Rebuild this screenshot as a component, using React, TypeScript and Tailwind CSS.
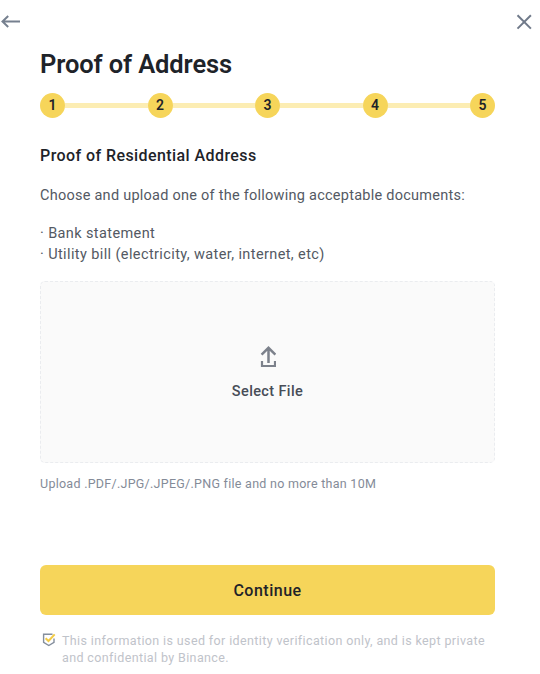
import { Fragment } from 'react';

const steps = [1, 2, 3, 4, 5];

const documents = ['Bank statement', 'Utility bill (electricity, water, internet, etc)'];

function BackIcon() {
    return (
        <svg width="20" height="14" viewBox="0 0 20 14" fill="none" stroke="#76808f" strokeWidth="2">
            <path d="M19 6.5H2.2M7.2 1L1.5 6.5l5.7 5.5" />
        </svg>
    );
}

function CloseIcon() {
    return (
        <svg width="16" height="16" viewBox="0 0 16 16" fill="none" stroke="#707a8a" strokeWidth="2">
            <path d="M1.5 1.2l13.4 13.4M14.9 1.2L1.5 14.6" />
        </svg>
    );
}

function UploadIcon() {
    return (
        <svg width="16" height="22" viewBox="0 0 16 22" fill="none" stroke="#7c818b" strokeWidth="2.5">
            <path d="M8.5 17V2M1.6 8.6l6.9-6.8 6.9 6.8" />
            <path d="M2 15v5h13v-5" strokeWidth="2.2" />
        </svg>
    );
}

function ShieldIcon() {
    return (
        <svg width="14" height="14" viewBox="0 0 14 14" fill="none">
            <path d="M10.5 1.3H1.6v8l5.2 3.2 5.2-3.2V5.6" stroke="#848e9c" strokeWidth="1.4" />
            <path d="M3.6 5.2l2.9 2.8 6.2-6.6" stroke="#f3cb45" strokeWidth="2" />
        </svg>
    );
}

export default function App() {
    return (
        <div className="flex h-[674px] w-[540px] flex-col bg-white font-[Roboto,sans-serif]">
            <header className="flex h-[43px] items-center justify-between pl-px pr-2">
                <button aria-label="Back">
                    <BackIcon />
                </button>
                <button aria-label="Close">
                    <CloseIcon />
                </button>
            </header>

            <main className="flex flex-col pl-10 pr-[45px]">
                <h1 className="mt-[3px] whitespace-nowrap text-[25.5px] font-semibold leading-9 tracking-[-0.12px] text-[#1e2329]">
                    Proof of Address
                </h1>

                {/* Progress */}
                <div className="mt-2.5 flex h-[26px] items-center">
                    {steps.map((step) => (
                        <Fragment key={step}>
                            {step > 1 && <div className="h-[5px] flex-1 bg-[#fcedb3]" />}
                            <div className="flex size-[25px] items-center justify-center rounded-full bg-[#f6d55a] text-sm font-semibold text-[#1e2329]">
                                {step}
                            </div>
                        </Fragment>
                    ))}
                </div>

                <h2 className="mt-[26px] whitespace-nowrap text-base font-medium leading-6 tracking-[0.42px] text-[#1e2329]">
                    Proof of Residential Address
                </h2>
                <p className="mt-[17px] whitespace-nowrap text-[14.5px] leading-[22px] tracking-[0.25px] text-[#535963]">
                    Choose and upload one of the following acceptable documents:
                </p>
                <ul className="mt-4 whitespace-nowrap text-[14.5px] leading-[21px] tracking-[0.39px] text-[#535963]">
                    {documents.map((doc) => (
                        <li key={doc}>· {doc}</li>
                    ))}
                </ul>

                {/* Dropzone */}
                <button className="mt-4 flex h-[182px] flex-col items-center rounded-[5px] border border-dashed border-[#eaecef] bg-[#fafafa] pt-[64px]">
                    <UploadIcon />
                    <span className="mt-[13px] text-[14.5px] font-medium leading-[22px] tracking-[0.38px] text-[#474d57]">
                        Select File
                    </span>
                </button>
                <p className="mt-[11px] whitespace-nowrap text-[12.5px] leading-5 tracking-[0.27px] text-[#848b98]">
                    Upload .PDF/.JPG/.JPEG/.PNG file and no more than 10M
                </p>

                <button className="mt-[71px] h-[50px] rounded-md bg-[#f6d55a] pt-px text-base font-medium tracking-[0.5px] text-[#1e2329]">
                    Continue
                </button>

                <div className="mt-[17px] flex gap-[6px] pl-[2px]">
                    <div className="pt-[1px]">
                        <ShieldIcon />
                    </div>
                    <p className="whitespace-nowrap text-[12.5px] leading-[17px] tracking-[0.38px] text-[#bfc3ca]">
                        This information is used for identity verification only, and is kept private
                        <br />
                        and confidential by Binance.
                    </p>
                </div>
            </main>
        </div>
    );
}
